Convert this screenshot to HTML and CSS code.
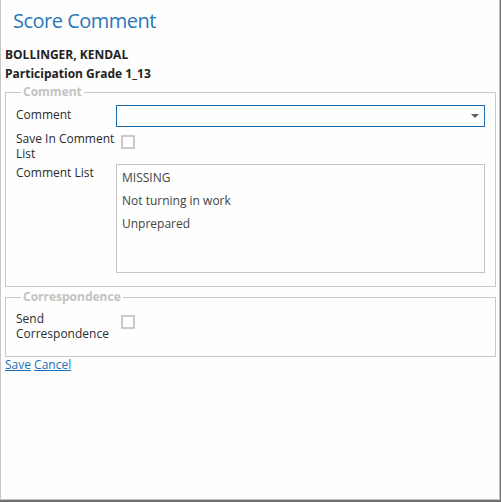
FILE: index.html
```html
<!DOCTYPE html>
<html>

<head>
    <title>Score Comment</title>
    <link rel="stylesheet" href="styles.css">
</head>

<body>
    <div class="window">
        <h1 class="title">Score Comment</h1>
        <p class="student">BOLLINGER, KENDAL</p>
        <p class="student">Participation Grade 1_13</p>

        <fieldset class="group">
            <legend>Comment</legend>
            <div class="row">
                <label class="field-label">Comment</label>
                <div class="combo">
                    <span class="combo-arrow"></span>
                </div>
            </div>
            <div class="row">
                <label class="field-label">Save In Comment List</label>
                <span class="checkbox"></span>
            </div>
            <div class="row">
                <label class="field-label">Comment List</label>
                <ul class="listbox">
                    <li>MISSING</li>
                    <li>Not turning in work</li>
                    <li>Unprepared</li>
                </ul>
            </div>
        </fieldset>

        <fieldset class="group corr">
            <legend>Correspondence</legend>
            <div class="row">
                <label class="field-label">Send Correspondence</label>
                <span class="checkbox"></span>
            </div>
        </fieldset>

        <div class="actions">
            <a href="#">Save</a>
            <a href="#">Cancel</a>
        </div>
    </div>
</body>

</html>
```

FILE: styles.css
```css
body {
    margin: 0;
    background-color: #6f6f6f;
    font-family: "Open Sans", Arial, sans-serif;
    font-size: 12px;
    color: #2b2b2b;
}

.window {
    width: 500px;
    height: 500px;
    box-sizing: border-box;
    background-color: #fdfefd;
    border: 1px solid #c6c6c6;
    border-top: none;
    padding: 0 3px 0 4px;
}

.title {
    margin: 0 0 0 8px;
    padding-top: 7px;
    font-size: 20px;
    font-weight: normal;
    line-height: 28px;
    letter-spacing: -0.5px;
    color: #2a77b9;
}

.student {
    margin: 0;
    font-weight: bold;
    line-height: 19px;
    color: #222;
}

.student:first-of-type {
    margin-top: 10px;
}

.student:last-of-type {
    margin-bottom: 2px;
}

.group {
    margin: 0;
    padding: 6px 10px 13px 10px;
    border: 1px solid #c9c9c9;
}

.group legend {
    padding: 0 2px;
    margin-left: 5px;
    font-weight: bold;
    color: #c3c3c3;
    line-height: 14px;
}

.row {
    display: flex;
    align-items: flex-start;
    margin-bottom: 2px;
}

.row:last-child {
    margin-bottom: 0;
}

.field-label {
    width: 100px;
    flex: none;
    line-height: 15px;
    padding-top: 2px;
}

.combo {
    flex: 1;
    height: 22px;
    box-sizing: border-box;
    border: 1px solid #1b6db3;
    display: flex;
    align-items: center;
    justify-content: flex-end;
    padding-right: 5px;
}

.combo-arrow {
    width: 0;
    height: 0;
    border-left: 4px solid transparent;
    border-right: 4px solid transparent;
    border-top: 4px solid #5e5e5e;
}

.checkbox {
    width: 14px;
    height: 14px;
    box-sizing: border-box;
    border: 2px solid #cbcbcb;
    margin: 6px 0 0 5px;
}

.listbox {
    flex: 1;
    height: 109px;
    box-sizing: border-box;
    margin: 1px 0 0 0;
    padding: 1px 5px;
    list-style: none;
    border: 1px solid #c6c6c6;
}

.listbox li {
    line-height: 23px;
    color: #444;
}

.corr {
    margin-top: 3px;
    padding-top: 5px;
    padding-bottom: 15px;
}

.actions {
    padding-top: 0;
    line-height: 16px;
}

.actions a {
    color: #1c6fb8;
}
```
